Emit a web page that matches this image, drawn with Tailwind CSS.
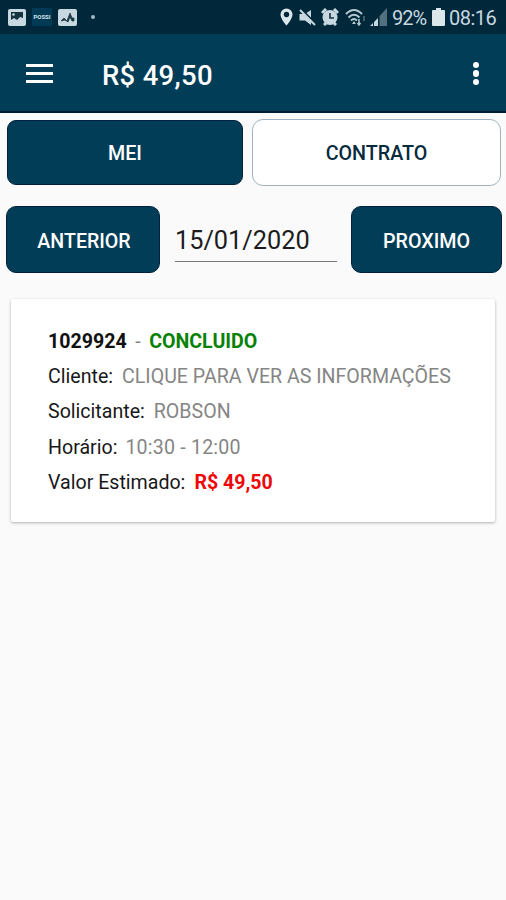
<!DOCTYPE html>
<html lang="pt-BR">
<head>
  <meta charset="UTF-8" />
  <meta name="viewport" content="width=device-width, initial-scale=1.0" />
  <title>Agenda</title>
  <script src="https://cdn.jsdelivr.net/npm/@tailwindcss/browser@4"></script>
</head>
<body class="min-h-screen overflow-hidden bg-[#fafafa] font-[Roboto,sans-serif] text-black">
  <!-- status bar -->
  <div class="flex h-[34px] items-center justify-between bg-[#00283b] pr-[9px] pl-2 text-[#c8d8e0]">
    <div class="flex items-center">
      <svg class="h-[17px] w-[18px]" viewBox="0 0 18 17">
        <rect width="18" height="17" rx="2" fill="#c8d8e0" />
        <path d="M3 3h12v6l-3-1-3 3-3-2-3 2z" fill="#17333f" />
        <circle cx="5.5" cy="5.5" r="1.3" fill="#c8d8e0" />
      </svg>
      <div class="ml-[6px] flex h-[18px] w-5 items-center justify-center bg-[#003a54]">
        <span class="text-[6px] leading-none font-bold text-[#d5e3ea]">POSSI</span>
      </div>
      <svg class="ml-[6px] h-[17px] w-[19px]" viewBox="0 0 19 17">
        <rect width="19" height="17" rx="2" fill="#c8d8e0" />
        <path d="M3 12l3-3 3 3 3-8 2 5 2 0v3l-2 0-2-4-2 5-3-2z" fill="#17333f" stroke="#17333f" stroke-width="0.7" />
      </svg>
      <span class="ml-[14px] size-1 rounded-full bg-[#a3b9c4]"></span>
    </div>
    <div class="flex items-center">
      <svg class="h-[18px] w-[13px]" viewBox="0 0 13 18">
        <path d="M6.5 0.5A6 6 0 0 0 .5 6.5C.5 11 6.5 17.5 6.5 17.5S12.500 11 12.5 6.5A6 6 0 0 0 6.5.5z" fill="#dce7eb" />
        <circle cx="6.5" cy="6.5" r="2.7" fill="#00283b" />
      </svg>
      <svg class="ml-[6px] h-[17px] w-[17px]" viewBox="0 0 17 17" fill="#c8d8e0">
        <path d="M0.5 5H6l6-4v15l-6-4.500H0.5z" />
        <path d="M2 0l15 15" stroke="#00283b" stroke-width="2" />
        <path d="M1 1l15 15" stroke="#c8d8e0" stroke-width="2" />
      </svg>
      <svg class="ml-[5px] h-[18px] w-[18px]" viewBox="0 0 18 18">
        <path d="M1 5l4-4M17 5l-4-4M3 17l2-2M15 17l-2-2" stroke="#c8d8e0" stroke-width="3" />
        <circle cx="9" cy="9.5" r="7.5" fill="#c8d8e0" />
        <path d="M9 5v5h4" fill="none" stroke="#17333f" stroke-width="1.6" />
      </svg>
      <svg class="ml-[6px] h-[18px] w-[21px]" viewBox="0 0 21 18" fill="none" stroke="#b6c8d1" stroke-width="2">
        <path d="M1 6q8-8 16 0M3.5 9.5q5.5-5.5 11 0M6 12.5q3-3 6 0" />
        <path d="M9 13l2 3h-4z" fill="#b6c8d1" stroke="none" />
        <path d="M14 11v6M12.5 15l1.5 2 1.5-2" stroke-width="1.5" />
        <path d="M19 8v5" stroke="#53707e" stroke-width="1.5" />
      </svg>
      <svg class="ml-1 h-[18px] w-[17px]" viewBox="0 0 17 18">
        <path d="M0 18h3v-3zM4 18h4v-8l-4 4z" fill="#c8d8e0" />
        <path d="M9.5 18H17V0l-7.5 8z" fill="#53707e" />
      </svg>
      <span class="ml-[5px] w-[35px] pt-px text-[20px] leading-none tracking-[-1px]">92%</span>
      <svg class="ml-[5px] h-[18px] w-[13px]" viewBox="0 0 13 18" fill="#dce7eb">
        <path d="M4 0h5v2h3a1 1 0 0 1 1 1v14a1 1 0 0 1-1 1H1a1 1 0 0 1-1-1V3a1 1 0 0 1 1-1h3z" />
      </svg>
      <span class="ml-[4px] w-[48px] pt-px text-[20px] leading-none tracking-[-0.5px]">08:16</span>
    </div>
  </div>

  <!-- app bar -->
  <header class="flex h-[79px] items-center border-b-2 border-[#001c33] bg-[#023d57] px-[26px] text-white">
    <div class="mt-[2px] flex w-[27px] flex-col gap-[5px]">
      <span class="h-[3px] bg-white"></span>
      <span class="h-[3px] bg-white"></span>
      <span class="h-[3px] bg-white"></span>
    </div>
    <h1 class="mt-[6px] ml-[49px] text-[27.5px] leading-8 font-medium tracking-[0.3px]">R$ 49,50</h1>
    <div class="mt-[2px] mr-[1px] ml-auto flex flex-col gap-[2px]">
      <span class="size-[6.5px] rounded-full bg-white"></span>
      <span class="size-[6.5px] rounded-full bg-white"></span>
      <span class="size-[6.5px] rounded-full bg-white"></span>
    </div>
  </header>

  <main>
    <div class="flex items-center gap-[9px] pt-[6px] pr-[5px] pl-[7px]">
      <button class="h-[65px] w-[236px] rounded-[9px] border border-[#00213f] bg-[#023d57] pt-[2px] text-[19.7px] font-medium text-white">MEI</button>
      <button class="h-[67px] flex-1 rounded-[11px] border border-[#a3b3bd] bg-white pt-[3px] text-[19.7px] font-medium text-[#062b3d]">CONTRATO</button>
    </div>

    <div class="mt-5 flex items-center pr-1 pl-[6px]">
      <button class="h-[67px] w-[154px] rounded-[10px] border border-[#00213f] bg-[#023d57] pt-1 pl-[2px] text-[19.6px] font-medium text-white">ANTERIOR</button>
      <div class="ml-[15px] h-[45px] w-[162px] border-b border-[#777] text-[25.3px] leading-[47px] text-[#1c1c1c]">15/01/2020</div>
      <button class="ml-auto h-[67px] w-[151px] rounded-[10px] border border-[#00213f] bg-[#023d57] pt-1 text-[19.7px] font-medium text-white">PROXIMO</button>
    </div>

    <section class="mx-[11px] mt-[26px] h-[223px] rounded-[2px] bg-white pt-[25px] pl-[37px] text-[19.6px] leading-[35.2px] whitespace-nowrap text-[#858585] shadow-[0_1px_3px_rgba(0,0,0,0.3)]">
      <p><b class="text-[#111]">1029924</b><span class="mx-[8.5px]">-</span><b class="text-[#078207]">CONCLUIDO</b></p>
      <p><span class="mr-[9px] text-[#181818]">Cliente:</span><span>CLIQUE PARA VER AS INFORMAÇÕES</span></p>
      <p><span class="mr-[9px] text-[#181818]">Solicitante:</span><span>ROBSON</span></p>
      <p><span class="mr-2 text-[#181818]">Horário:</span><span class="tracking-[0.2px]">10:30 - 12:00</span></p>
      <p><span class="mr-[9px] text-[#181818]">Valor Estimado:</span><b class="text-[#ee0808]">R$ 49,50</b></p>
    </section>
  </main>
</body>
</html>
